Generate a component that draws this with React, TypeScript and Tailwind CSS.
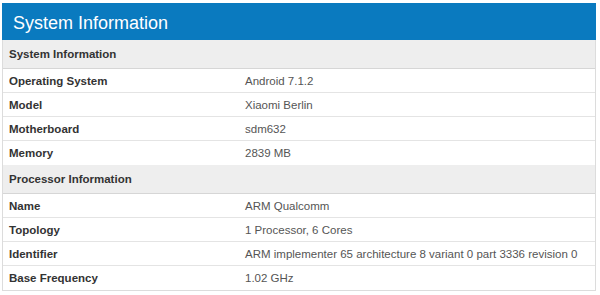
import React from "react";

type Row = { label: string; value: string };

const sections: { title: string; rows: Row[] }[] = [
  {
    title: "System Information",
    rows: [
      { label: "Operating System", value: "Android 7.1.2" },
      { label: "Model", value: "Xiaomi Berlin" },
      { label: "Motherboard", value: "sdm632" },
      { label: "Memory", value: "2839 MB" },
    ],
  },
  {
    title: "Processor Information",
    rows: [
      { label: "Name", value: "ARM Qualcomm" },
      { label: "Topology", value: "1 Processor, 6 Cores" },
      { label: "Identifier", value: "ARM implementer 65 architecture 8 variant 0 part 3336 revision 0" },
      { label: "Base Frequency", value: "1.02 GHz" },
    ],
  },
];

export default function App() {
  return (
    <div className="w-[600px] h-[295px] bg-white pt-[3px] pl-[2px]" style={{ fontFamily: '"Liberation Sans", Arial, sans-serif' }}>
      <div className="w-[594px]">
        <div className="h-[37px] bg-[#0a7abf] flex items-center pl-[11px] pt-[2px]">
          <h1 className="text-white text-[18px] leading-none">System Information</h1>
        </div>
        <div className="border-x border-b border-[#dcdcdc]">
          {sections.map((s) => (
            <div key={s.title}>
              <div className="h-[29px] bg-[#eeeeee] border-b border-[#d6d6d6] flex items-center pl-[6px] pt-[1px] text-[11.5px] font-bold text-[#333]">
                {s.title}
              </div>
              {s.rows.map((r, i) => (
                <div
                  key={r.label}
                  className={`h-[24px] flex items-center pt-[2px] ${i < s.rows.length - 1 ? "border-b border-[#e4e4e4]" : ""}`}
                >
                  <div className="w-[236px] pl-[6px] text-[11.5px] font-bold text-[#333]">{r.label}</div>
                  <div className="pl-[6px] text-[11.5px] text-[#555]">{r.value}</div>
                </div>
              ))}
            </div>
          ))}
        </div>
      </div>
    </div>
  );
}
